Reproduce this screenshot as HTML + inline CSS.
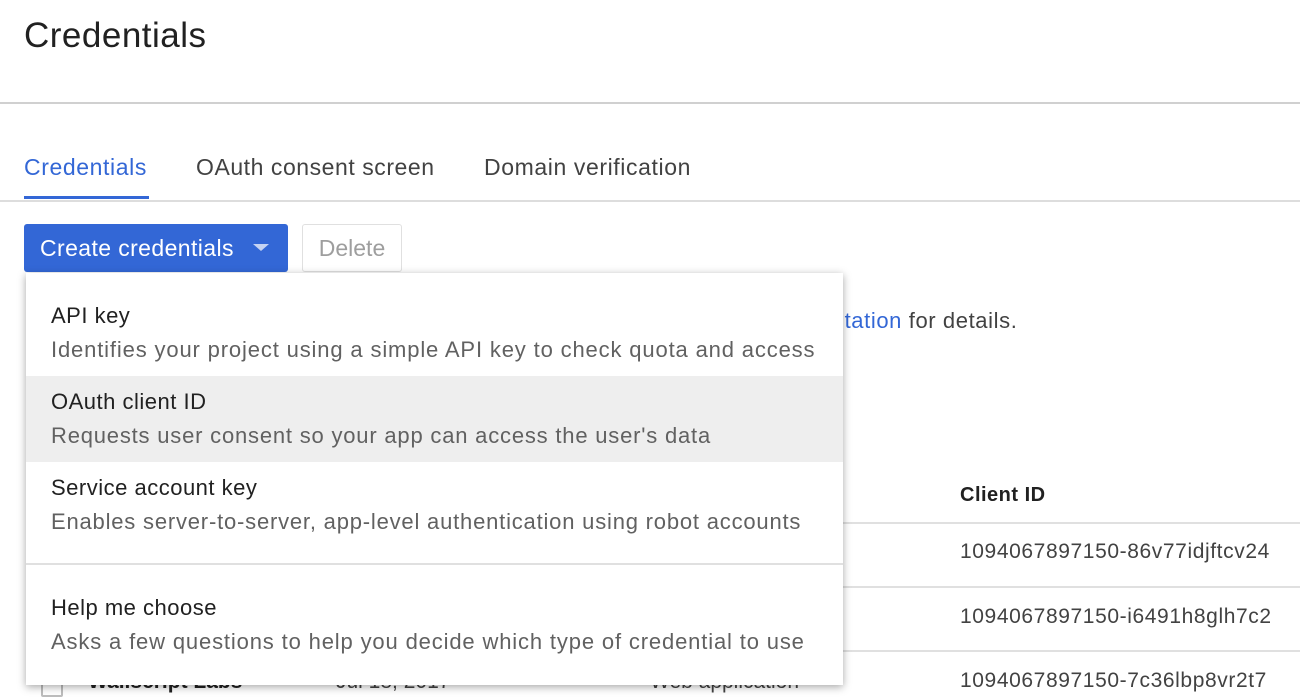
<!DOCTYPE html>
<html><head><style>
body{margin:0;width:1300px;height:700px;overflow:hidden;background:#fff;font-family:"Liberation Sans",Arial,sans-serif;position:relative;color:#212121}
.a{position:absolute;white-space:nowrap}
</style></head><body>
<div class="a" style="left:24px;top:16px;font-size:35px;color:#212121;letter-spacing:0.5px">Credentials</div>
<div class="a" style="left:0;top:102px;width:1300px;height:2px;background:#d0d0d0"></div>
<div class="a" style="left:24px;top:154px;font-size:23px;color:#3367d6;letter-spacing:0.6px">Credentials</div>
<div class="a" style="left:24px;top:196px;width:125px;height:3px;background:#3367d6"></div>
<div class="a" style="left:196px;top:154px;font-size:23px;color:#424242;letter-spacing:0.55px">OAuth consent screen</div>
<div class="a" style="left:484px;top:154px;font-size:23px;color:#424242;letter-spacing:0.6px">Domain verification</div>
<div class="a" style="left:0;top:200px;width:1300px;height:2px;background:#ddd"></div>
<div class="a" style="left:24px;top:224px;width:264px;height:48px;background:#3367d6;border-radius:3px;color:#fff;font-size:23px;line-height:48px;padding-left:16px;box-sizing:border-box;letter-spacing:0.4px">Create credentials</div>
<div class="a" style="left:253px;top:244px;width:0;height:0;border-left:8px solid transparent;border-right:8px solid transparent;border-top:7px solid #c5d3f3"></div>
<div class="a" style="left:302px;top:224px;width:100px;height:48px;border:1px solid #e0e0e0;border-radius:3px;box-sizing:border-box;color:#9e9e9e;font-size:23px;line-height:46px;text-align:center">Delete</div>
<div class="a" style="left:800px;top:308px;font-size:22px;color:#424242;letter-spacing:0.6px"><span style="color:#3367d6">mentation</span> for details.</div>
<div class="a" style="left:960px;top:484px;font-size:20px;font-weight:bold;color:#212121;letter-spacing:0.5px">Client ID</div>
<div class="a" style="left:843px;top:522px;width:457px;height:2px;background:#e0e0e0"></div>
<div class="a" style="left:960px;top:540px;font-size:21px;color:#424242;letter-spacing:0.6px">1094067897150-86v77idjftcv24</div>
<div class="a" style="left:843px;top:586px;width:457px;height:2px;background:#e0e0e0"></div>
<div class="a" style="left:960px;top:605px;font-size:21px;color:#424242;letter-spacing:0.6px">1094067897150-i6491h8glh7c2</div>
<div class="a" style="left:843px;top:650px;width:457px;height:2px;background:#e0e0e0"></div>
<div class="a" style="left:960px;top:669px;font-size:21px;color:#424242;letter-spacing:0.6px">1094067897150-7c36lbp8vr2t7</div>
<div class="a" style="left:41px;top:675px;width:18px;height:18px;border:2px solid #bdbdbd;border-radius:2px"></div>
<div class="a" style="left:88px;top:670px;font-size:21px;color:#212121;font-weight:bold">Wallscript Labs</div>
<div class="a" style="left:336px;top:670px;font-size:21px;color:#424242">Jul 18, 2017</div>
<div class="a" style="left:650px;top:670px;font-size:21px;color:#424242">Web application</div>
<div class="a" style="left:26px;top:273px;width:817px;height:412px;background:#fff;box-shadow:0 2px 8px rgba(0,0,0,.35)">
 <div class="a" style="left:25px;top:30px;font-size:22px;color:#212121;letter-spacing:0.5px">API key</div>
 <div class="a" style="left:25px;top:64px;font-size:22px;color:#616161;letter-spacing:0.85px">Identifies your project using a simple API key to check quota and access</div>
 <div class="a" style="left:0;top:103px;width:817px;height:86px;background:#eeeeee"></div>
 <div class="a" style="left:25px;top:116px;font-size:22px;color:#212121;letter-spacing:0.5px">OAuth client ID</div>
 <div class="a" style="left:25px;top:150px;font-size:22px;color:#616161;letter-spacing:0.8px">Requests user consent so your app can access the user's data</div>
 <div class="a" style="left:25px;top:202px;font-size:22px;color:#212121;letter-spacing:0.5px">Service account key</div>
 <div class="a" style="left:25px;top:236px;font-size:22px;color:#616161;letter-spacing:0.8px">Enables server-to-server, app-level authentication using robot accounts</div>
 <div class="a" style="left:0;top:290px;width:817px;height:2px;background:#e0e0e0"></div>
 <div class="a" style="left:25px;top:322px;font-size:22px;color:#212121;letter-spacing:0.5px">Help me choose</div>
 <div class="a" style="left:25px;top:356px;font-size:22px;color:#616161;letter-spacing:0.85px">Asks a few questions to help you decide which type of credential to use</div>
</div>
</body></html>
